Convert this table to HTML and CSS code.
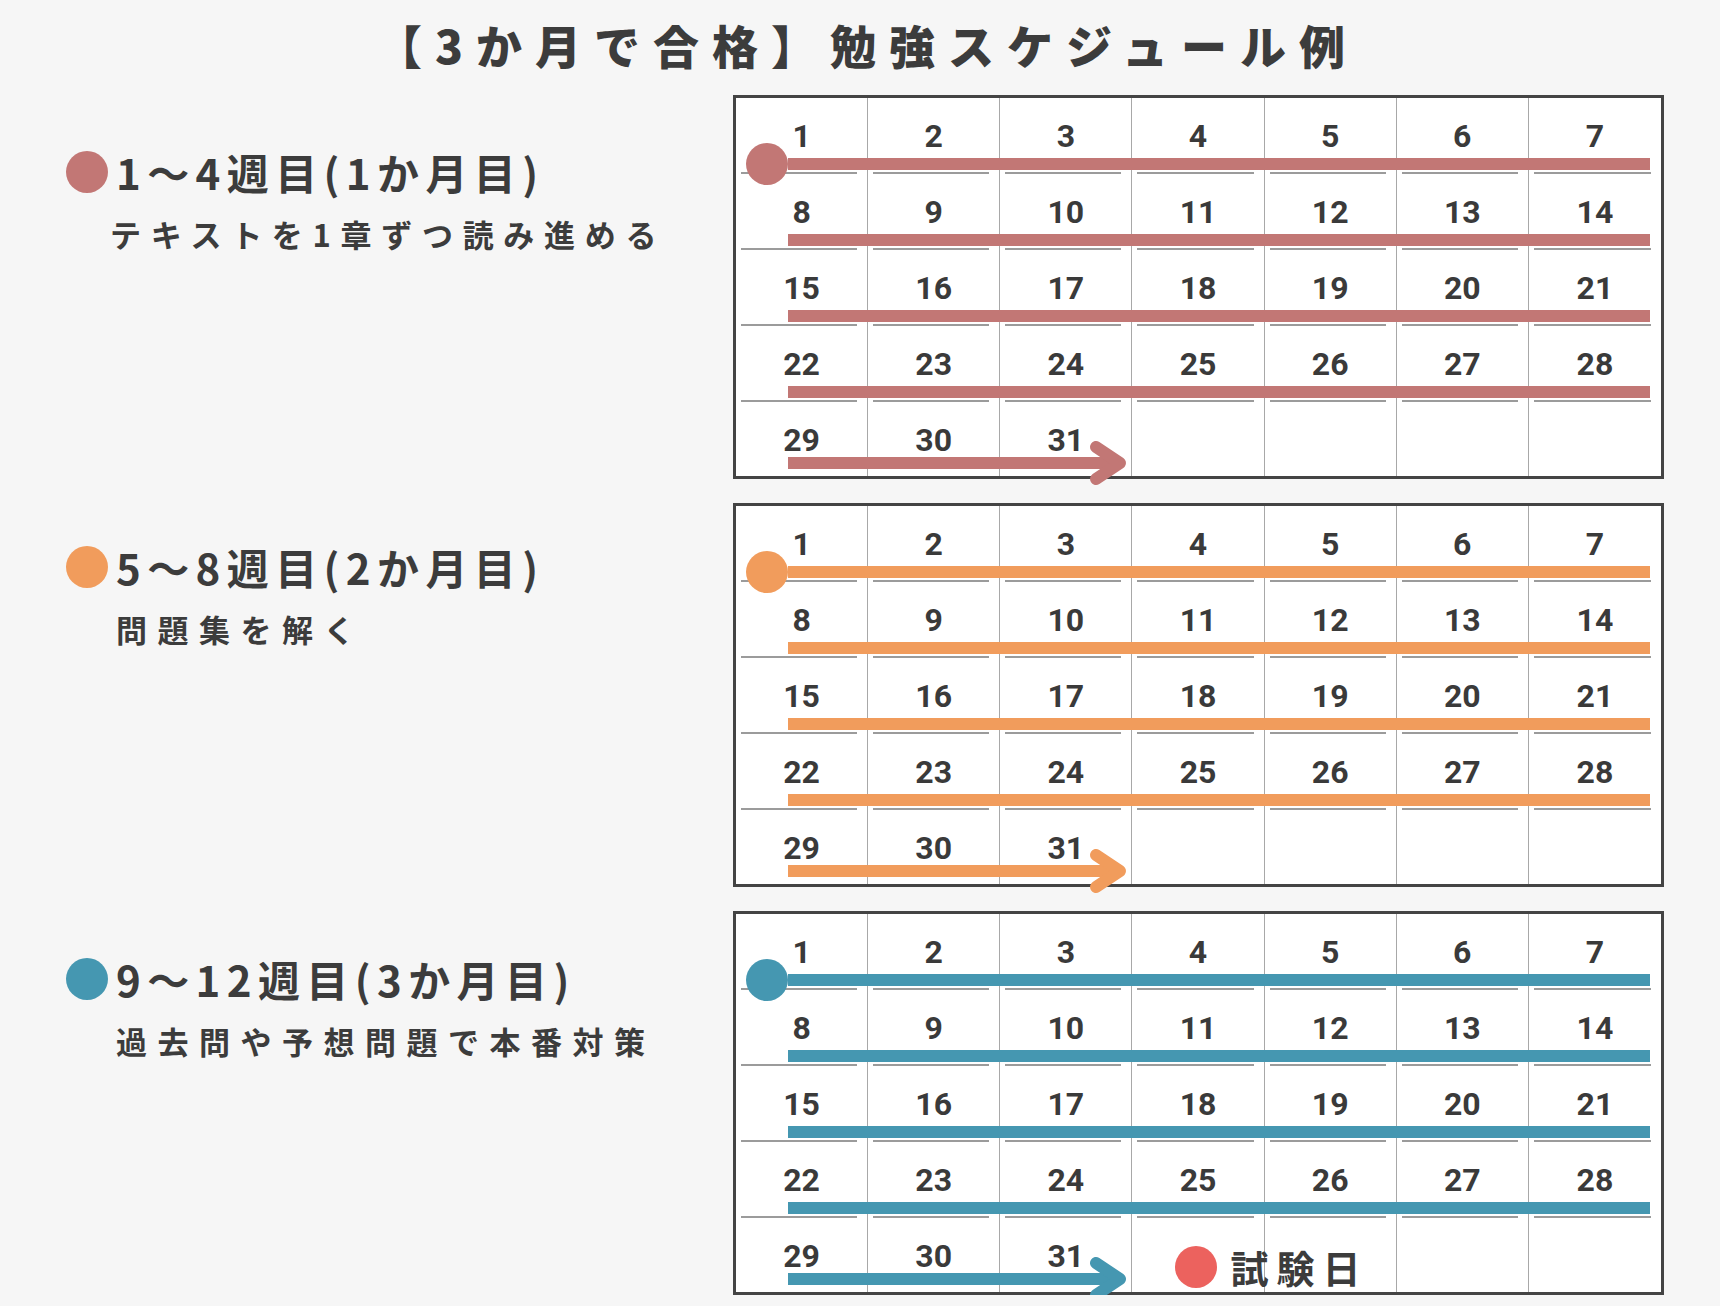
FILE: index.html
```html
<!DOCTYPE html>
<html lang="ja">
<head>
<meta charset="utf-8">
<title>【3か月で合格】勉強スケジュール例</title>
<link rel="stylesheet" href="styles.css">
</head>
<body>
<main class="page">
  <h1 class="title">【3か月で合格】勉強スケジュール例</h1>
  <div class="plans">
    <section class="plan plan--m1">
      <div class="plan__info">
        <h2 class="plan__head"><span class="plan__dot"></span>1～4週目(1か月目)</h2>
        <p class="plan__sub plan__sub--shift">テキストを1章ずつ読み進める</p>
      </div>
      <div class="cal">
        <div class="week week--first"><div class="day">1</div><div class="day">2</div><div class="day">3</div><div class="day">4</div><div class="day">5</div><div class="day">6</div><div class="day">7</div><div class="bar"></div></div>
        <div class="week"><div class="day">8</div><div class="day">9</div><div class="day">10</div><div class="day">11</div><div class="day">12</div><div class="day">13</div><div class="day">14</div><div class="bar"></div></div>
        <div class="week"><div class="day">15</div><div class="day">16</div><div class="day">17</div><div class="day">18</div><div class="day">19</div><div class="day">20</div><div class="day">21</div><div class="bar"></div></div>
        <div class="week"><div class="day">22</div><div class="day">23</div><div class="day">24</div><div class="day">25</div><div class="day">26</div><div class="day">27</div><div class="day">28</div><div class="bar"></div></div>
        <div class="week week--last"><div class="day">29</div><div class="day">30</div><div class="day">31</div><div class="day"></div><div class="day"></div><div class="day"></div><div class="day"></div>
          <svg class="arrow"><path class="arrow__line" d="M52 61H382"/><path class="arrow__head" d="M360 45L384 61L360 77"/></svg>
        </div>
      </div>
    </section>

    <section class="plan plan--m2">
      <div class="plan__info">
        <h2 class="plan__head"><span class="plan__dot"></span>5～8週目(2か月目)</h2>
        <p class="plan__sub">問題集を解く</p>
      </div>
      <div class="cal">
        <div class="week week--first"><div class="day">1</div><div class="day">2</div><div class="day">3</div><div class="day">4</div><div class="day">5</div><div class="day">6</div><div class="day">7</div><div class="bar"></div></div>
        <div class="week"><div class="day">8</div><div class="day">9</div><div class="day">10</div><div class="day">11</div><div class="day">12</div><div class="day">13</div><div class="day">14</div><div class="bar"></div></div>
        <div class="week"><div class="day">15</div><div class="day">16</div><div class="day">17</div><div class="day">18</div><div class="day">19</div><div class="day">20</div><div class="day">21</div><div class="bar"></div></div>
        <div class="week"><div class="day">22</div><div class="day">23</div><div class="day">24</div><div class="day">25</div><div class="day">26</div><div class="day">27</div><div class="day">28</div><div class="bar"></div></div>
        <div class="week week--last"><div class="day">29</div><div class="day">30</div><div class="day">31</div><div class="day"></div><div class="day"></div><div class="day"></div><div class="day"></div>
          <svg class="arrow"><path class="arrow__line" d="M52 61H382"/><path class="arrow__head" d="M360 45L384 61L360 77"/></svg>
        </div>
      </div>
    </section>

    <section class="plan plan--m3">
      <div class="plan__info">
        <h2 class="plan__head"><span class="plan__dot"></span>9～12週目(3か月目)</h2>
        <p class="plan__sub">過去問や予想問題で本番対策</p>
      </div>
      <div class="cal">
        <div class="week week--first"><div class="day">1</div><div class="day">2</div><div class="day">3</div><div class="day">4</div><div class="day">5</div><div class="day">6</div><div class="day">7</div><div class="bar"></div></div>
        <div class="week"><div class="day">8</div><div class="day">9</div><div class="day">10</div><div class="day">11</div><div class="day">12</div><div class="day">13</div><div class="day">14</div><div class="bar"></div></div>
        <div class="week"><div class="day">15</div><div class="day">16</div><div class="day">17</div><div class="day">18</div><div class="day">19</div><div class="day">20</div><div class="day">21</div><div class="bar"></div></div>
        <div class="week"><div class="day">22</div><div class="day">23</div><div class="day">24</div><div class="day">25</div><div class="day">26</div><div class="day">27</div><div class="day">28</div><div class="bar"></div></div>
        <div class="week week--last"><div class="day">29</div><div class="day">30</div><div class="day">31</div><div class="day"></div><div class="day"></div><div class="day"></div><div class="day"></div>
          <svg class="arrow"><path class="arrow__line" d="M52 61H382"/><path class="arrow__head" d="M360 45L384 61L360 77"/></svg>
          <div class="exam">試験日</div>
        </div>
      </div>
    </section>
  </div>
</main>
</body>
</html>
```

FILE: styles.css
```css
body {
  margin: 0;
  background: #f6f6f6;
  color: #3c3c3c;
  font-family: "Noto Sans CJK JP", "Noto Sans", sans-serif;
}

.page {
  width: 1720px;
  display: flex;
  flex-direction: column;
}

.title {
  margin: 0 0 7px;
  height: 88px;
  line-height: 88px;
  padding-left: 14px;
  font-size: 46px;
  font-weight: 900;
  letter-spacing: 13px;
  text-align: center;
  white-space: nowrap;
}

.plans {
  display: flex;
  flex-direction: column;
  gap: 24px;
}

.plan {
  display: flex;
}

.plan--m1 { --c: #c27775; }
.plan--m2 { --c: #f19c5c; }
.plan--m3 { --c: #4597b1; }

.plan__info {
  flex: 0 0 733px;
  box-sizing: border-box;
  padding-left: 66px;
}

.plan--m1 .plan__info { padding-top: 56px; }
.plan--m2 .plan__info { padding-top: 43px; }
.plan--m3 .plan__info { padding-top: 47px; }

.plan__head {
  margin: 0;
  display: flex;
  align-items: center;
  height: 42px;
  font-size: 42px;
  line-height: 42px;
  font-weight: 700;
  letter-spacing: 6.4px;
  white-space: nowrap;
}

.plan__dot {
  flex: none;
  width: 42px;
  height: 42px;
  border-radius: 50%;
  background: var(--c);
  margin-right: 8px;
}

.plan__sub {
  margin: 21px 0 0 50px;
  font-size: 31px;
  line-height: 40px;
  font-weight: 700;
  letter-spacing: 10.5px;
  white-space: nowrap;
}

.plan__sub--shift {
  margin-left: 44px;
  letter-spacing: 9.7px;
}

.cal {
  flex: 0 0 931px;
  height: 384px;
  box-sizing: border-box;
  border: 3px solid #444;
  background: #fff;
  display: flex;
  flex-direction: column;
}

.week {
  display: grid;
  grid-template-columns: repeat(7, 1fr);
  grid-template-rows: 60px 12px 4px;
}

.week--last {
  grid-template-rows: 74px;
}

.day {
  grid-row: 1 / -1;
  border-right: 1px solid #a8a8a8;
  padding-top: 22px;
  font-family: Roboto, "Liberation Sans", sans-serif;
  font-weight: 700;
  font-size: 32px;
  line-height: 32px;
  text-align: center;
  color: #3a3a3a;
  background: linear-gradient(#9b9b9b, #9b9b9b) no-repeat left 5px bottom / calc(100% - 15px) 2px;
}

.day:nth-child(1) { grid-column: 1; }
.day:nth-child(2) { grid-column: 2; }
.day:nth-child(3) { grid-column: 3; }
.day:nth-child(4) { grid-column: 4; }
.day:nth-child(5) { grid-column: 5; }
.day:nth-child(6) { grid-column: 6; }
.day:nth-child(7) { grid-column: 7; border-right: 0; }

.week--last .day {
  background: none;
}

.bar {
  grid-row: 2;
  grid-column: 1 / -1;
  margin: 0 11px 0 52px;
  background: var(--c);
  position: relative;
}

.week--first .bar::before {
  content: "";
  position: absolute;
  left: -42px;
  top: -15px;
  width: 42px;
  height: 42px;
  border-radius: 50%;
  background: var(--c);
}

.arrow {
  grid-row: 1;
  grid-column: 1 / 5;
  width: 100%;
  height: 100%;
  overflow: visible;
  fill: none;
  stroke: var(--c);
  stroke-width: 12;
}

.arrow__head {
  stroke-linecap: round;
  stroke-linejoin: round;
}

.exam {
  grid-row: 1;
  grid-column: 4 / 6;
  align-self: start;
  display: flex;
  align-items: center;
  gap: 13px;
  padding: 28px 0 0 43px;
  font-size: 38px;
  line-height: 42px;
  font-weight: 700;
  letter-spacing: 8px;
  white-space: nowrap;
}

.exam::before {
  content: "";
  flex: none;
  width: 42px;
  height: 42px;
  border-radius: 50%;
  background: #ec625e;
}
```
